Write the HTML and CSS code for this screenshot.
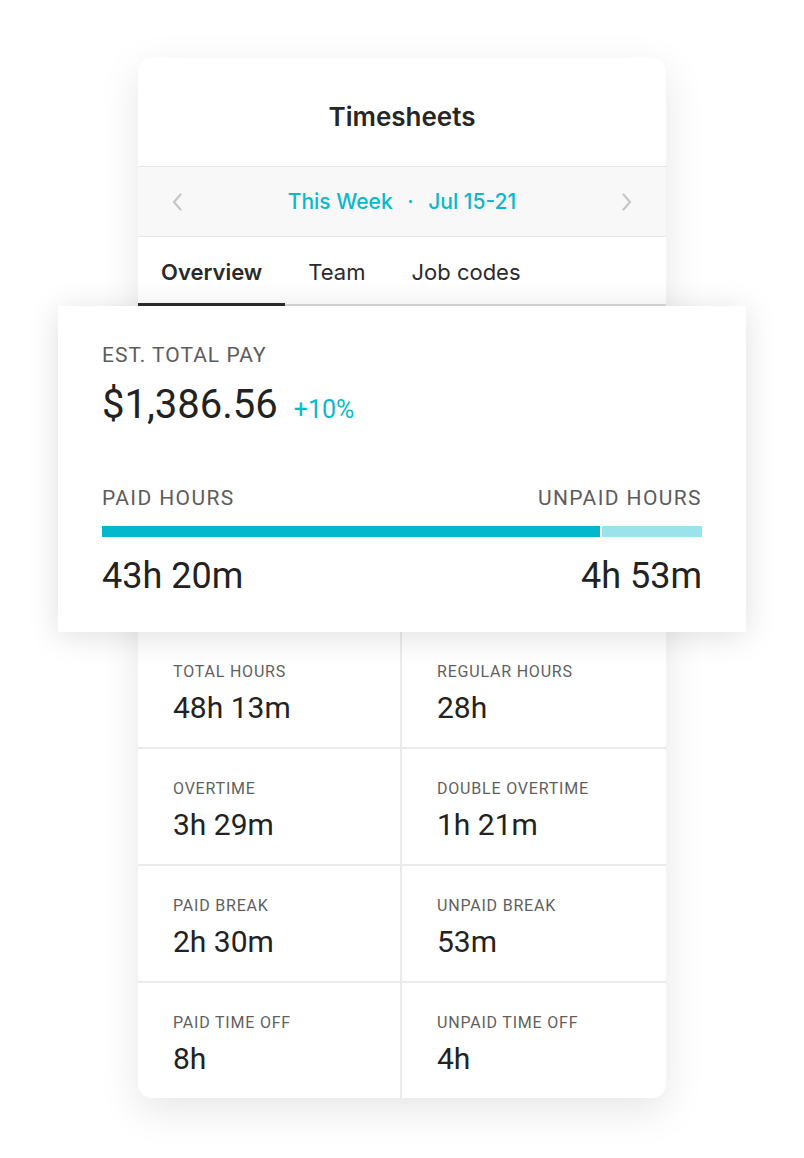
FILE: index.html
```html
<!DOCTYPE html>
<html>
<head>
<meta charset="utf-8">
<link rel="stylesheet" href="styles.css">
</head>
<body>
<div class="page">
  <div class="card">
    <div class="header">Timesheets</div>
    <div class="datenav">
      <svg class="chev" width="10" height="18" viewBox="0 0 10 18"><path d="M8.5 1.5 L2 9 L8.5 16.5" fill="none" stroke="#c6c6c6" stroke-width="2.2" stroke-linecap="round" stroke-linejoin="round"/></svg>
      <div class="range">This Week <span class="dot">·</span> Jul 15-21</div>
      <svg class="chev" width="10" height="18" viewBox="0 0 10 18"><path d="M1.5 1.5 L8 9 L1.5 16.5" fill="none" stroke="#c6c6c6" stroke-width="2.2" stroke-linecap="round" stroke-linejoin="round"/></svg>
    </div>
    <div class="tabs">
      <div class="tab active">Overview</div>
      <div class="tab">Team</div>
      <div class="tab">Job codes</div>
    </div>
    <div class="summary">
      <div class="s-label">EST. TOTAL PAY</div>
      <div class="amount-row"><span class="amount">$1,386.56</span><span class="delta">+10%</span></div>
      <div class="split-labels"><span class="s-label">PAID HOURS</span><span class="s-label">UNPAID HOURS</span></div>
      <div class="bar"><div class="bar-paid" style="width:83%"></div><div class="bar-unpaid"></div></div>
      <div class="split-values"><span>43h 20m</span><span>4h 53m</span></div>
    </div>
    <div class="grid">
      <div class="cell"><div class="c-label">TOTAL HOURS</div><div class="c-value">48h 13m</div></div>
      <div class="cell"><div class="c-label">REGULAR HOURS</div><div class="c-value">28h</div></div>
      <div class="cell"><div class="c-label">OVERTIME</div><div class="c-value">3h 29m</div></div>
      <div class="cell"><div class="c-label">DOUBLE OVERTIME</div><div class="c-value">1h 21m</div></div>
      <div class="cell"><div class="c-label">PAID BREAK</div><div class="c-value">2h 30m</div></div>
      <div class="cell"><div class="c-label">UNPAID BREAK</div><div class="c-value">53m</div></div>
      <div class="cell"><div class="c-label">PAID TIME OFF</div><div class="c-value">8h</div></div>
      <div class="cell"><div class="c-label">UNPAID TIME OFF</div><div class="c-value">4h</div></div>
    </div>
  </div>
</div>
</body>
</html>
```

FILE: styles.css
```css
* { box-sizing: border-box; }
html, body { margin: 0; padding: 0; background: #ffffff; }
body { font-family: Roboto, "Liberation Sans", sans-serif; color: #222; }

.page {
  display: flex;
  justify-content: center;
  padding-top: 58px;
  height: 1158px;
}

.card {
  width: 528px;
  background: #fff;
  border-radius: 14px;
  box-shadow: 0 12px 40px rgba(0, 0, 0, 0.10);
  display: flex;
  flex-direction: column;
  height: 1040px;
}

.header {
  height: 109px;
  display: flex;
  align-items: center;
  justify-content: center;
  font-family: Inter, Roboto, sans-serif;
  font-weight: 600;
  font-size: 26px;
  color: #262626;
  border-bottom: 1px solid #e6e6e6;
  padding-top: 8px;
}

.datenav {
  height: 70px;
  background: #f8f8f8;
  border-bottom: 1px solid #e6e6e6;
  display: flex;
  align-items: center;
  justify-content: space-between;
  padding: 0 34px 0 34px;
}
.chev { display: block; }
.range {
  font-family: Inter, Roboto, sans-serif;
  font-weight: 500;
  font-size: 21px;
  color: #0ab9cc;
}
.range .dot { margin: 0 9px; }

.tabs {
  height: 69px;
  display: flex;
  align-items: stretch;
  border-bottom: 2px solid #dcdcdc;
}
.tab {
  padding: 4px 23px 0 23px;
  display: flex;
  align-items: center;
  font-family: Inter, Roboto, sans-serif;
  font-size: 22px;
  color: #2a2a2a;
  margin-bottom: -2px;
  border-bottom: 3px solid transparent;
}
.tab.active {
  font-weight: 600;
  border-bottom-color: #2d2d2d;
}

.summary {
  margin: 0 -80px;
  height: 326px;
  background: #fff;
  padding: 37px 44px 0 44px;
  box-shadow: 0 4px 30px rgba(0, 0, 0, 0.13);
  position: relative;
  z-index: 1;
}
.s-label {
  font-size: 21px;
  line-height: 24px;
  letter-spacing: 1px;
  color: #5c5c5c;
}
.split-labels .s-label { letter-spacing: 1.4px; }
.amount-row {
  margin-top: 14px;
  display: flex;
  align-items: baseline;
  line-height: 48px;
}
.amount {
  font-size: 40px;
  color: #222;
}
.delta {
  margin-left: 16px;
  font-size: 25px;
  color: #0ab9cc;
}
.split-labels {
  margin-top: 52px;
  display: flex;
  justify-content: space-between;
}
.bar {
  margin-top: 16px;
  height: 11px;
  display: flex;
  gap: 2px;
}
.bar-paid { background: #02b8cc; }
.bar-unpaid { flex: 1; background: #9ae3ea; }
.split-values {
  margin-top: 19px;
  display: flex;
  justify-content: space-between;
  font-size: 36px;
  line-height: 40px;
  color: #222;
}

.grid {
  display: grid;
  grid-template-columns: 1fr 1fr;
  flex: 1;
}
.cell {
  padding: 30px 0 0 35px;
  height: 117px;
  border-top: 2px solid #ebebeb;
}
.cell:nth-child(-n+2) { border-top: none; height: 115px; }
.cell:nth-child(odd) { border-right: 2px solid #ebebeb; }
.c-label {
  font-size: 16px;
  line-height: 20px;
  letter-spacing: 0.8px;
  color: #5f5f5f;
}
.c-value {
  margin-top: 8px;
  font-size: 30px;
  line-height: 36px;
  color: #222;
}
```
